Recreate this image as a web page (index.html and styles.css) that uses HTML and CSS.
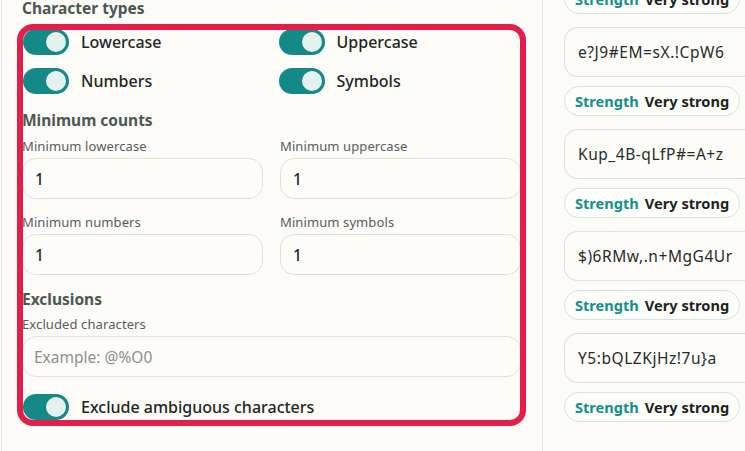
FILE: index.html
```html
<!DOCTYPE html>
<html lang="en">
<head>
<meta charset="utf-8">
<title>Password generator</title>
<link rel="stylesheet" href="styles.css">
</head>
<body>
<div class="page">
  <section class="settings">
    <h3 class="group-title first">Character types</h3>
    <div class="toggle-grid">
      <label class="toggle-row"><span class="switch"><span class="knob"></span></span><span class="toggle-label">Lowercase</span></label>
      <label class="toggle-row"><span class="switch"><span class="knob"></span></span><span class="toggle-label">Uppercase</span></label>
      <label class="toggle-row"><span class="switch"><span class="knob"></span></span><span class="toggle-label">Numbers</span></label>
      <label class="toggle-row"><span class="switch"><span class="knob"></span></span><span class="toggle-label">Symbols</span></label>
    </div>

    <h3 class="group-title counts">Minimum counts</h3>
    <div class="field-grid">
      <div class="field"><span class="field-label">Minimum lowercase</span><div class="input">1</div></div>
      <div class="field"><span class="field-label">Minimum uppercase</span><div class="input">1</div></div>
      <div class="field"><span class="field-label">Minimum numbers</span><div class="input">1</div></div>
      <div class="field"><span class="field-label">Minimum symbols</span><div class="input">1</div></div>
    </div>

    <h3 class="group-title exclusions">Exclusions</h3>
    <div class="field single">
      <span class="field-label">Excluded characters</span>
      <div class="input placeholder">Example: @%O0</div>
    </div>
    <label class="toggle-row ambiguous"><span class="switch"><span class="knob"></span></span><span class="toggle-label">Exclude ambiguous characters</span></label>
  </section>

  <aside class="results">
    <div class="badge lead"><span class="badge-key">Strength</span><span class="badge-val">Very strong</span></div>
    <div class="entry">
      <div class="pw-card">e?J9#EM=sX.!CpW6</div>
      <div class="badge"><span class="badge-key">Strength</span><span class="badge-val">Very strong</span></div>
    </div>
    <div class="entry">
      <div class="pw-card">Kup_4B-qLfP#=A+z</div>
      <div class="badge"><span class="badge-key">Strength</span><span class="badge-val">Very strong</span></div>
    </div>
    <div class="entry">
      <div class="pw-card">$)6RMw,.n+MgG4Ur</div>
      <div class="badge"><span class="badge-key">Strength</span><span class="badge-val">Very strong</span></div>
    </div>
    <div class="entry">
      <div class="pw-card">Y5:bQLZKjHz!7u}a</div>
      <div class="badge"><span class="badge-key">Strength</span><span class="badge-val">Very strong</span></div>
    </div>
  </aside>

  <div class="highlight"></div>
</div>
</body>
</html>
```

FILE: styles.css
```css
* { box-sizing: border-box; }

html, body {
  margin: 0;
  padding: 0;
  background: #fcfbf7;
  overflow: hidden;
}

body {
  font-family: "Noto Sans", "Liberation Sans", sans-serif;
  color: #1f2624;
}

.page {
  position: relative;
  display: flex;
  align-items: flex-start;
  width: 745px;
  height: 451px;
  overflow: hidden;
}

/* ---------- settings column ---------- */
.settings {
  margin-left: 1px;
  width: 542px;
  height: 451px;
  flex: none;
  border-left: 1px solid #e4e2d8;
  border-right: 1px solid #e4e2d8;
  padding: 0 21px 0 20px;
}

.group-title {
  margin: 0;
  font-size: 15.5px;
  line-height: 20px;
  font-weight: 700;
  color: #4c5753;
}

.group-title.first { margin-top: -2px; }
.group-title.counts { margin-top: 16px; }
.group-title.exclusions { margin-top: 14px; }

.toggle-grid {
  margin-top: 11px;
  display: grid;
  grid-template-columns: 1fr 1fr;
  column-gap: 12px;
  row-gap: 13px;
}

.toggle-row {
  display: flex;
  align-items: center;
  gap: 12px;
  height: 26px;
  padding-left: 1px;
}

.switch {
  position: relative;
  flex: none;
  width: 46px;
  height: 26px;
  border-radius: 13px;
  background: #138a87;
}

.knob {
  position: absolute;
  top: 3px;
  right: 3px;
  width: 20px;
  height: 20px;
  border-radius: 50%;
  background: #e4f1ee;
}

.toggle-label {
  font-size: 16px;
  font-weight: 500;
  color: #1e2725;
}

.field-grid {
  margin-top: 8px;
  display: grid;
  grid-template-columns: 241px 241px;
  column-gap: 17px;
  row-gap: 15px;
}

.field {
  display: flex;
  flex-direction: column;
  gap: 4px;
}

.field.single { margin-top: 7px; }

.field-label {
  font-size: 13px;
  line-height: 16px;
  letter-spacing: 0.1px;
  color: #56605c;
}

.input {
  height: 41px;
  border: 1px solid #e2dfd3;
  border-radius: 14px;
  background: #fdfcf9;
  padding: 0 12px;
  display: flex;
  align-items: center;
  font-size: 15.5px;
  font-weight: 500;
  color: #1e2725;
}

.input.placeholder {
  padding-left: 11px;
  font-weight: 400;
  color: #8b908d;
}

.toggle-row.ambiguous { margin-top: 17px; }

/* ---------- results column ---------- */
.results {
  flex: none;
  width: 240px;
  padding-left: 21px;
  margin-top: -16px;
}

.entry { margin-top: 13px; }

.pw-card {
  width: 220px;
  height: 50px;
  border: 1px solid #e2dfd3;
  border-right: none;
  border-radius: 14px 0 0 14px;
  background: #fdfcf9;
  padding-left: 13px;
  display: flex;
  align-items: center;
  font-size: 15.5px;
  letter-spacing: 0.55px;
  color: #262c2b;
  white-space: nowrap;
}

.badge {
  margin-top: 9px;
  width: 176px;
  height: 30px;
  border: 1px solid #cfe5e2;
  border-radius: 15px;
  background: #fdfdfa;
  display: flex;
  align-items: center;
  gap: 6px;
  padding-left: 10px;
  font-size: 14.6px;
  font-weight: 700;
  white-space: nowrap;
}

.badge.lead { margin-top: 0; }

.badge-key { color: #13908b; }
.badge-val { color: #1c2422; }

/* ---------- annotation overlay ---------- */
.highlight {
  position: absolute;
  left: 17px;
  top: 24px;
  width: 509px;
  height: 402px;
  border: 6px solid #e21e4a;
  border-radius: 16px;
  pointer-events: none;
}
```
